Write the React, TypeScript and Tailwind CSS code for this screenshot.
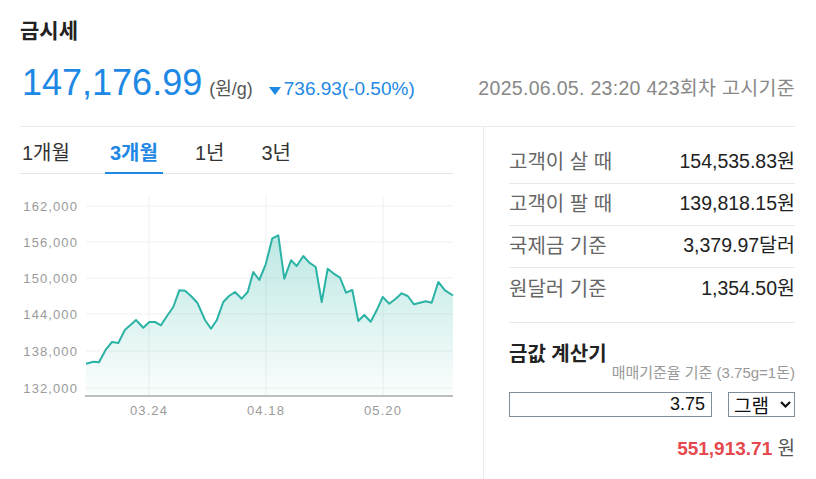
const points: [number, number][] = [
  [86, 362.7], [93.3, 360.7], [99, 361.3], [106, 348.3], [112, 341], [118.3, 342], [125, 328.7],
  [130.5, 324], [136, 319], [143.3, 326.7], [149.3, 321], [155, 321], [161, 324.3], [167, 315],
  [173.3, 306], [179.3, 289.3], [185, 289.7], [191, 295], [197.3, 301.7], [205, 319], [211, 327.7],
  [216.7, 319.3], [223.3, 301], [229, 295], [235, 291], [241.7, 297.7], [247.7, 291], [253.3, 271],
  [259.3, 279], [265.7, 263.3], [272.3, 237.3], [278.3, 234.3], [284.3, 277.7], [291, 259.3],
  [296.7, 265], [303.3, 255], [309.3, 261.7], [315.7, 266], [321.7, 301], [327.7, 267.7],
  [333.3, 272.3], [340, 276.7], [346, 291.7], [352.3, 289], [358.3, 320], [364.3, 314],
  [370.7, 320.7], [376.7, 309.3], [382.7, 296], [389.3, 302.7], [395.7, 297.7], [401.7, 292.3],
  [407.7, 295], [414, 303.3], [420, 301.7], [425.7, 300.3], [431.7, 301.7], [438.3, 281],
  [445, 289.3], [453, 294.5],
];

const yTicks = [
  { label: '162,000', y: 205 },
  { label: '156,000', y: 241 },
  { label: '150,000', y: 277 },
  { label: '144,000', y: 313 },
  { label: '138,000', y: 350 },
  { label: '132,000', y: 387 },
];

const xTicks = [
  { label: '03.24', x: 149 },
  { label: '04.18', x: 266 },
  { label: '05.20', x: 383 },
];

const rows = [
  { label: '고객이 살 때', value: '154,535.83원' },
  { label: '고객이 팔 때', value: '139,818.15원' },
  { label: '국제금 기준', value: '3,379.97달러' },
  { label: '원달러 기준', value: '1,354.50원' },
];

const tabs = ['1개월', '3개월', '1년', '3년'];

function PriceChart() {
  const line = points.map(([x, y], i) => `${i === 0 ? 'M' : 'L'}${x} ${y}`).join(' ');
  const area = `${line} L453 395 L86 395 Z`;

  return (
    <svg width="434" height="250" viewBox="20 180 434 250" className="block mt-[7px]">
      <defs>
        <linearGradient id="goldFill" x1="0" y1="230" x2="0" y2="395" gradientUnits="userSpaceOnUse">
          <stop offset="0" stopColor="#2cb5a8" stopOpacity="0.32" />
          <stop offset="1" stopColor="#2cb5a8" stopOpacity="0.02" />
        </linearGradient>
      </defs>
      {yTicks.map((t) => (
        <g key={t.label}>
          <line x1="86" x2="453" y1={t.y} y2={t.y} stroke="#efefef" strokeWidth="1" />
          <text
            x="78"
            y={t.y + 4.5}
            textAnchor="end"
            fontSize="13"
            letterSpacing="1.1"
            fill="#9a9a9a"
            fontFamily="'Liberation Sans', sans-serif"
          >
            {t.label}
          </text>
        </g>
      ))}
      {xTicks.map((t) => (
        <g key={t.label}>
          <line x1={t.x} x2={t.x} y1="195" y2="395" stroke="#efefef" strokeWidth="1" />
          <text
            x={t.x}
            y="414"
            textAnchor="middle"
            fontSize="13"
            letterSpacing="1.1"
            fill="#9a9a9a"
            fontFamily="'Liberation Sans', sans-serif"
          >
            {t.label}
          </text>
        </g>
      ))}
      <path d={area} fill="url(#goldFill)" />
      <path d={line} fill="none" stroke="#2bb3a6" strokeWidth="2" strokeLinejoin="round" />
      <line x1="85" x2="453" y1="395" y2="395" stroke="#a8a8a8" strokeWidth="1.5" />
    </svg>
  );
}

export default function App() {
  return (
    <div className="w-[816px] h-[479px] overflow-hidden bg-white pl-5 pr-[21px] font-['Liberation_Sans','Noto_Sans_CJK_KR',sans-serif] text-[#222]">
      <h1 className="pt-[17px] text-[21px] leading-[28px] font-bold">금시세</h1>

      <div className="flex items-baseline justify-between pt-[18px] pb-[22px] border-b border-[#ebebeb]">
        <div className="flex items-baseline pl-[2px]">
          <span className="text-[36px] leading-[40px] text-[#1e88e5]">147,176.99</span>
          <span className="ml-[7px] text-[18px] text-[#555]">(원/g)</span>
          <span className="ml-[16px] flex items-baseline text-[19px] text-[#1e88e5]">
            <svg width="12" height="8" viewBox="0 0 12 8" className="mr-[3px] self-center mt-[4px]">
              <path d="M0 0 H12 L6 8 Z" fill="#1e88e5" />
            </svg>
            736.93(-0.50%)
          </span>
        </div>
        <span className="text-[19.5px] tracking-[0.3px] text-[#888]">2025.06.05. 23:20 423회차 고시기준</span>
      </div>

      <div className="flex">
        <div className="w-[464px] pr-[30px] border-r border-[#ebebeb] h-[354px]">
          <div className="h-[47px] border-b border-[#e5e5e5] flex">
            <div className="flex gap-[27px] -ml-[3px]">
              {tabs.map((tab, i) => (
                <button
                  key={tab}
                  className={
                    tab === '3개월'
                      ? 'px-[5px] pt-[7px] text-[20px] font-bold text-[#1e88e5] border-b-2 border-[#1e88e5] -mb-px'
                      : i === 0
                        ? 'pl-[5px] pr-[8px] pt-[7px] text-[20px] text-[#333]'
                        : 'px-[5px] pt-[7px] text-[20px] text-[#333]'
                  }
                >
                  {tab}
                </button>
              ))}
            </div>
          </div>
          <PriceChart />
        </div>

        <div className="flex-1 pl-[25px] pt-[15px]">
          {rows.map((row, i) => (
            <div
              key={row.label}
              className={
                i < rows.length - 1
                  ? 'h-[42px] flex items-center justify-between border-b border-[#e8e8e8]'
                  : 'h-[42px] flex items-center justify-between'
              }
            >
              <span className="text-[20px] text-[#666]">{row.label}</span>
              <span className="text-[19.5px] text-[#222]">{row.value}</span>
            </div>
          ))}

          <div className="mt-[12px] border-t border-[#e8e8e8] pt-[19px]">
            <h2 className="text-[20px] leading-[24px] font-bold">금값 계산기</h2>
            <p className="-mt-[2px] text-right text-[15px] leading-[18px] text-[#999]">매매기준율 기준 (3.75g=1돈)</p>
            <div className="mt-[10px] flex justify-between">
              <input
                readOnly
                value="3.75"
                className="w-[203px] h-[25px] border border-[#7f8d9b] px-[6px] text-right text-[18px] text-[#111] outline-none"
              />
              <div className="relative w-[67px] h-[25px]">
                <select className="w-full h-full appearance-none border border-[#7f8d9b] pl-[5px] text-[19px] text-[#111] bg-white outline-none">
                  <option>그램</option>
                  <option>돈</option>
                </select>
                <svg
                  width="11"
                  height="7"
                  viewBox="0 0 11 7"
                  className="absolute right-[4px] top-[9px] pointer-events-none"
                >
                  <path d="M1 1 L5.5 5.5 L10 1" fill="none" stroke="#111" strokeWidth="2.2" />
                </svg>
              </div>
            </div>
            <p className="mt-[20px] text-right text-[19px] leading-[24px]">
              <span className="font-bold text-[#e5484d]">551,913.71</span>
              <span className="text-[#555]"> 원</span>
            </p>
          </div>
        </div>
      </div>
    </div>
  );
}
